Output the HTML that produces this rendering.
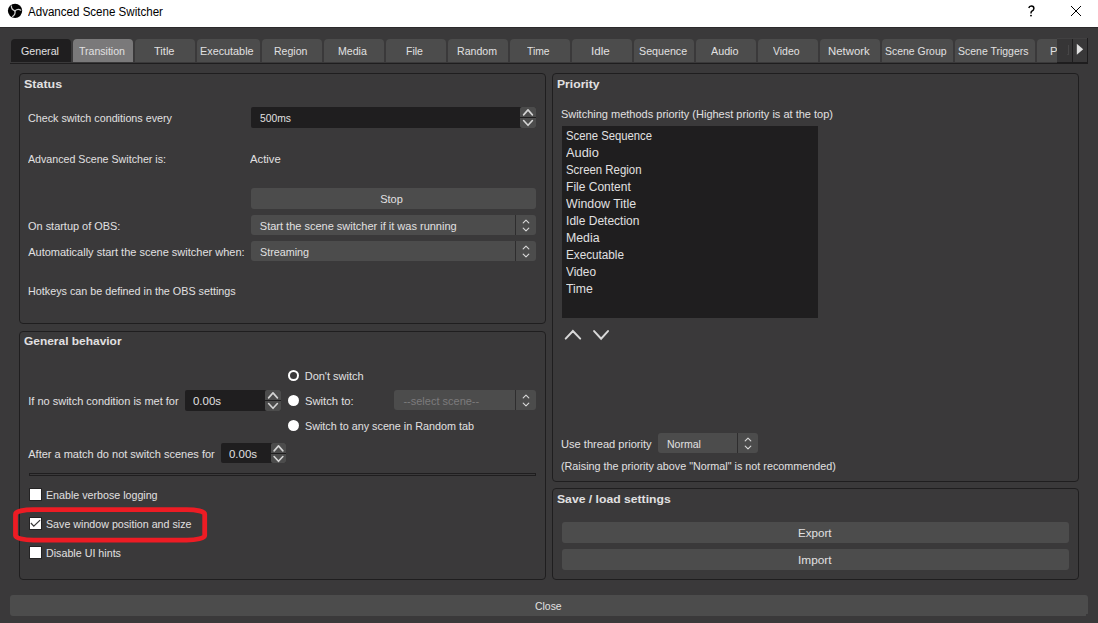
<!DOCTYPE html>
<html><head><meta charset="utf-8"><style>
html,body{margin:0;padding:0;width:1098px;height:623px;overflow:hidden;background:#3a393a;}
.r{position:absolute;}
.t{position:absolute;font-family:"Liberation Sans",sans-serif;white-space:pre;transform-origin:0 0;}
</style></head><body>
<div class="r" style="left:0px;top:0px;width:1098px;height:27px;background:#ffffff;"></div>
<div class="r" style="left:0px;top:27px;width:1098px;height:1px;background:#2b2a2b;"></div>
<svg class="r" style="left:7px;top:3px" width="16" height="16" viewBox="0 0 16 16">
<circle cx="8.05" cy="7.85" r="7.15" fill="#000"/>
<g fill="none" stroke="#cfcfcf" stroke-width="1.25" stroke-linecap="round">
<path d="M4.4 3.0 Q4.2 6.6 8.0 7.8"/>
<path d="M13.8 7.2 Q11.0 5.2 8.0 7.8"/>
<path d="M5.6 13.5 Q8.6 11.5 8.0 7.8"/>
</g>
</svg>
<svg class="r" style="left:1026px;top:4px" width="12" height="14" viewBox="0 0 12 14"><path d="M2.8 4.0 Q3.2 2.0 5.4 2.0 Q7.9 2.0 7.9 4.4 Q7.9 6.0 5.6 7.4 Q5.0 7.9 5.0 9.6" stroke="#000" stroke-width="1.45" fill="none"/><circle cx="5.0" cy="11.6" r="0.95" fill="#000"/></svg>
<svg class="r" style="left:1070px;top:5px" width="12" height="12" viewBox="0 0 12 12">
<path d="M1 1 L11 11 M11 1 L1 11" stroke="#000" stroke-width="1.0" fill="none"/></svg>
<div class="r" style="left:11px;top:39px;width:60px;height:23px;background:#1f1e1f;border-radius:4px 4px 0 0;"></div>
<div class="r" style="left:73px;top:39px;width:60px;height:23px;background:#7a797a;border-radius:4px 4px 0 0;"></div>
<div class="r" style="left:135px;top:39px;width:60px;height:23px;background:#4c4c4c;border-radius:4px 4px 0 0;"></div>
<div class="r" style="left:197px;top:39px;width:63px;height:23px;background:#4c4c4c;border-radius:4px 4px 0 0;"></div>
<div class="r" style="left:262px;top:39px;width:60px;height:23px;background:#4c4c4c;border-radius:4px 4px 0 0;"></div>
<div class="r" style="left:324px;top:39px;width:60px;height:23px;background:#4c4c4c;border-radius:4px 4px 0 0;"></div>
<div class="r" style="left:386px;top:39px;width:60px;height:23px;background:#4c4c4c;border-radius:4px 4px 0 0;"></div>
<div class="r" style="left:448px;top:39px;width:60px;height:23px;background:#4c4c4c;border-radius:4px 4px 0 0;"></div>
<div class="r" style="left:510px;top:39px;width:60px;height:23px;background:#4c4c4c;border-radius:4px 4px 0 0;"></div>
<div class="r" style="left:572px;top:39px;width:60px;height:23px;background:#4c4c4c;border-radius:4px 4px 0 0;"></div>
<div class="r" style="left:634px;top:39px;width:60px;height:23px;background:#4c4c4c;border-radius:4px 4px 0 0;"></div>
<div class="r" style="left:696px;top:39px;width:60px;height:23px;background:#4c4c4c;border-radius:4px 4px 0 0;"></div>
<div class="r" style="left:758px;top:39px;width:60px;height:23px;background:#4c4c4c;border-radius:4px 4px 0 0;"></div>
<div class="r" style="left:820px;top:39px;width:60px;height:23px;background:#4c4c4c;border-radius:4px 4px 0 0;"></div>
<div class="r" style="left:882px;top:39px;width:71px;height:23px;background:#4c4c4c;border-radius:4px 4px 0 0;"></div>
<div class="r" style="left:955px;top:39px;width:80px;height:23px;background:#4c4c4c;border-radius:4px 4px 0 0;"></div>
<div class="r" style="left:1037px;top:39px;width:20px;height:23px;background:#4c4c4c;border-radius:4px 0 0 0;"></div>
<div class="r" style="left:10px;top:63px;width:1047px;height:1px;background:#1f1e1f;"></div>
<div class="r" style="left:19px;top:73px;width:527px;height:251px;border:1px solid #1f1e1f;box-sizing:border-box;border-radius:4px;"></div>
<div class="r" style="left:19px;top:331px;width:527px;height:249px;border:1px solid #1f1e1f;box-sizing:border-box;border-radius:4px;"></div>
<div class="r" style="left:552px;top:73px;width:527px;height:409px;border:1px solid #1f1e1f;box-sizing:border-box;border-radius:4px;"></div>
<div class="r" style="left:552px;top:488px;width:527px;height:92px;border:1px solid #1f1e1f;box-sizing:border-box;border-radius:4px;"></div>
<div class="r" style="left:251px;top:107px;width:285px;height:21px;background:#1f1e1f;border-radius:2px;"></div>
<div class="r" style="left:520px;top:107px;width:16px;height:10px;background:#4c4c4c;border-radius:2px 2px 0 0;"></div>
<div class="r" style="left:520px;top:118px;width:16px;height:10px;background:#4c4c4c;border-radius:0 0 2px 2px;"></div>
<svg class="r" style="left:520px;top:107px" width="16" height="21" viewBox="0 0 16 21">
<path d="M3.5999999999999996 7.9 L8.0 2.9 L12.4 7.9 M3.5999999999999996 13.5 L8.0 18.3 L12.4 13.5" stroke="#d4d4d4" stroke-width="1.6" fill="none" stroke-linecap="round" stroke-linejoin="round"/></svg>
<div class="r" style="left:251px;top:188px;width:285px;height:21px;background:#4c4c4c;border-radius:3px;"></div>
<div class="r" style="left:251px;top:215px;width:285px;height:20px;background:#4c4c4c;border-radius:3px;"></div>
<div class="r" style="left:515px;top:215px;width:1px;height:20px;background:#2e2d2e;"></div>
<svg class="r" style="left:516px;top:215px" width="20" height="20" viewBox="0 0 20 20">
<path d="M7.2 7.9 L10.0 5.2 L12.8 7.9 M7.2 13.2 L10.0 15.9 L12.8 13.2" stroke="#d8d8d8" stroke-width="1.15" fill="none" stroke-linecap="round" stroke-linejoin="round"/></svg>
<div class="r" style="left:251px;top:241px;width:285px;height:20px;background:#4c4c4c;border-radius:3px;"></div>
<div class="r" style="left:515px;top:241px;width:1px;height:20px;background:#2e2d2e;"></div>
<svg class="r" style="left:516px;top:241px" width="20" height="20" viewBox="0 0 20 20">
<path d="M7.2 7.9 L10.0 5.2 L12.8 7.9 M7.2 13.2 L10.0 15.9 L12.8 13.2" stroke="#d8d8d8" stroke-width="1.15" fill="none" stroke-linecap="round" stroke-linejoin="round"/></svg>
<div class="r" style="left:288.0px;top:370.0px;width:11px;height:11px;border-radius:50%;background:#fff;"></div>
<div class="r" style="left:289.8px;top:371.8px;width:7.4px;height:7.4px;border-radius:50%;background:#3a393a;"></div>
<div class="r" style="left:185px;top:390px;width:96px;height:21px;background:#1f1e1f;border-radius:2px;"></div>
<div class="r" style="left:265px;top:390px;width:16px;height:10px;background:#4c4c4c;border-radius:2px 2px 0 0;"></div>
<div class="r" style="left:265px;top:401px;width:16px;height:10px;background:#4c4c4c;border-radius:0 0 2px 2px;"></div>
<svg class="r" style="left:265px;top:390px" width="16" height="21" viewBox="0 0 16 21">
<path d="M3.5999999999999996 7.9 L8.0 2.9 L12.4 7.9 M3.5999999999999996 13.5 L8.0 18.3 L12.4 13.5" stroke="#d4d4d4" stroke-width="1.6" fill="none" stroke-linecap="round" stroke-linejoin="round"/></svg>
<div class="r" style="left:288.0px;top:395.0px;width:11px;height:11px;border-radius:50%;background:#fff;"></div>
<div class="r" style="left:394px;top:390px;width:142px;height:20px;background:#4c4c4c;border-radius:3px;"></div>
<div class="r" style="left:515px;top:390px;width:1px;height:20px;background:#2e2d2e;"></div>
<svg class="r" style="left:516px;top:390px" width="20" height="20" viewBox="0 0 20 20">
<path d="M7.2 7.9 L10.0 5.2 L12.8 7.9 M7.2 13.2 L10.0 15.9 L12.8 13.2" stroke="#d8d8d8" stroke-width="1.15" fill="none" stroke-linecap="round" stroke-linejoin="round"/></svg>
<div class="r" style="left:288.0px;top:420.0px;width:11px;height:11px;border-radius:50%;background:#fff;"></div>
<div class="r" style="left:221px;top:443px;width:65px;height:20px;background:#1f1e1f;border-radius:2px;"></div>
<div class="r" style="left:271px;top:443px;width:15px;height:10px;background:#4c4c4c;border-radius:2px 2px 0 0;"></div>
<div class="r" style="left:271px;top:454px;width:15px;height:9px;background:#4c4c4c;border-radius:0 0 2px 2px;"></div>
<svg class="r" style="left:271px;top:443px" width="15" height="20" viewBox="0 0 15 20">
<path d="M3.0999999999999996 7.9 L7.5 2.9 L11.9 7.9 M3.0999999999999996 13.5 L7.5 18.3 L11.9 13.5" stroke="#d4d4d4" stroke-width="1.6" fill="none" stroke-linecap="round" stroke-linejoin="round"/></svg>
<div class="r" style="left:29px;top:473px;width:507px;height:3px;border:1px solid #1f1e1f;box-sizing:border-box;"></div>
<div class="r" style="left:29px;top:488px;width:13px;height:13px;background:#ffffff;border:1px solid #242324;box-sizing:border-box;"></div>
<div class="r" style="left:29px;top:517px;width:13px;height:13px;background:#ffffff;border:1px solid #242324;box-sizing:border-box;"></div>
<svg class="r" style="left:30px;top:518px" width="11" height="11" viewBox="0 0 11 11"><path d="M0.9 5.0 L3.8 8.2 L10.1 2.1" stroke="#3a393a" stroke-width="1.25" fill="none"/></svg>
<div class="r" style="left:29px;top:546px;width:13px;height:13px;background:#ffffff;border:1px solid #242324;box-sizing:border-box;"></div>
<div class="r" style="left:562px;top:126px;width:256px;height:192px;background:#1f1e1f;"></div>
<svg class="r" style="left:560px;top:326px" width="54" height="18" viewBox="0 0 54 18">
<path d="M5.7 12.6 L12.9 5 L20.2 12.6 M34.1 5.1 L41.1 12.7 L48 5.1" stroke="#d8d8d8" stroke-width="2" fill="none" stroke-linecap="round" stroke-linejoin="miter"/></svg>
<div class="r" style="left:658px;top:433px;width:100px;height:20px;background:#4c4c4c;border-radius:3px;"></div>
<div class="r" style="left:737px;top:433px;width:1px;height:20px;background:#2e2d2e;"></div>
<svg class="r" style="left:738px;top:433px" width="20" height="20" viewBox="0 0 20 20">
<path d="M7.2 7.9 L10.0 5.2 L12.8 7.9 M7.2 13.2 L10.0 15.9 L12.8 13.2" stroke="#d8d8d8" stroke-width="1.15" fill="none" stroke-linecap="round" stroke-linejoin="round"/></svg>
<div class="r" style="left:562px;top:522px;width:507px;height:21px;background:#4c4c4c;border-radius:3px;"></div>
<div class="r" style="left:562px;top:549px;width:507px;height:21px;background:#4c4c4c;border-radius:3px;"></div>
<div class="r" style="left:10px;top:595px;width:1078px;height:21px;background:#4c4c4c;border-radius:3px;"></div>
<svg class="r" style="left:0;top:0" width="230" height="560" viewBox="0 0 230 560">
<rect x="15.5" y="509.6" width="189.2" height="30.5" rx="18" ry="4.6" stroke="#ed1c24" stroke-width="4.8" fill="none"/></svg>
<div class="t" style="left:28.30px;top:6.00px;font-size:12px;line-height:12px;color:#000000;transform:scaleX(0.9634);">Advanced Scene Switcher</div>
<div class="t" style="left:20.70px;top:46.00px;font-size:11px;line-height:11px;color:#e1e0e1;transform:scaleX(0.9701);">General</div>
<div class="t" style="left:78.70px;top:46.00px;font-size:11px;line-height:11px;color:#e1e0e1;transform:scaleX(0.9597);">Transition</div>
<div class="t" style="left:154.25px;top:46.00px;font-size:11px;line-height:11px;color:#e1e0e1;transform:scaleX(1.0065);">Title</div>
<div class="t" style="left:200.40px;top:46.00px;font-size:11px;line-height:11px;color:#e1e0e1;transform:scaleX(0.9843);">Executable</div>
<div class="t" style="left:274.00px;top:46.00px;font-size:11px;line-height:11px;color:#e1e0e1;transform:scaleX(0.9569);">Region</div>
<div class="t" style="left:338.25px;top:46.00px;font-size:11px;line-height:11px;color:#e1e0e1;transform:scaleX(0.9631);">Media</div>
<div class="t" style="left:406.20px;top:46.00px;font-size:11px;line-height:11px;color:#e1e0e1;transform:scaleX(0.9561);">File</div>
<div class="t" style="left:456.70px;top:46.00px;font-size:11px;line-height:11px;color:#e1e0e1;transform:scaleX(0.9611);">Random</div>
<div class="t" style="left:527.40px;top:46.00px;font-size:11px;line-height:11px;color:#e1e0e1;transform:scaleX(0.9372);">Time</div>
<div class="t" style="left:591.35px;top:46.00px;font-size:11px;line-height:11px;color:#e1e0e1;transform:scaleX(1.0567);">Idle</div>
<div class="t" style="left:638.60px;top:46.00px;font-size:11px;line-height:11px;color:#e1e0e1;transform:scaleX(0.9723);">Sequence</div>
<div class="t" style="left:710.95px;top:46.00px;font-size:11px;line-height:11px;color:#e1e0e1;transform:scaleX(0.9764);">Audio</div>
<div class="t" style="left:773.40px;top:46.00px;font-size:11px;line-height:11px;color:#e1e0e1;transform:scaleX(0.9503);">Video</div>
<div class="t" style="left:827.85px;top:46.00px;font-size:11px;line-height:11px;color:#e1e0e1;transform:scaleX(1.0345);">Network</div>
<div class="t" style="left:885.40px;top:46.00px;font-size:11px;line-height:11px;color:#e1e0e1;transform:scaleX(0.9494);">Scene Group</div>
<div class="t" style="left:958.45px;top:46.00px;font-size:11px;line-height:11px;color:#e1e0e1;transform:scaleX(0.9523);">Scene Triggers</div>
<div class="t" style="left:1049.70px;top:46.00px;font-size:11px;line-height:11px;color:#e1e0e1;transform:scaleX(1.0264);">Pause</div>
<div class="t" style="left:23.80px;top:79.00px;font-size:11.5px;line-height:11.5px;color:#e1e0e1;font-weight:700;transform:scaleX(1.0833);">Status</div>
<div class="t" style="left:24.05px;top:336.00px;font-size:11.5px;line-height:11.5px;color:#e1e0e1;font-weight:700;transform:scaleX(1.0380);">General behavior</div>
<div class="t" style="left:557.10px;top:79.00px;font-size:11.5px;line-height:11.5px;color:#e1e0e1;font-weight:700;transform:scaleX(1.0569);">Priority</div>
<div class="t" style="left:557.10px;top:493.50px;font-size:11.5px;line-height:11.5px;color:#e1e0e1;font-weight:700;transform:scaleX(1.0585);">Save / load settings</div>
<div class="t" style="left:28.20px;top:113.00px;font-size:11px;line-height:11px;color:#e1e0e1;transform:scaleX(0.9772);">Check switch conditions every</div>
<div class="t" style="left:259.80px;top:113.00px;font-size:11px;line-height:11px;color:#e1e0e1;transform:scaleX(0.9366);">500ms</div>
<div class="t" style="left:28.20px;top:154.00px;font-size:11px;line-height:11px;color:#e1e0e1;transform:scaleX(0.9684);">Advanced Scene Switcher is:</div>
<div class="t" style="left:250.20px;top:154.00px;font-size:11px;line-height:11px;color:#e1e0e1;transform:scaleX(1.0252);">Active</div>
<div class="t" style="left:380.18px;top:194.00px;font-size:11px;line-height:11px;color:#e1e0e1;">Stop</div>
<div class="t" style="left:28.20px;top:221.00px;font-size:11px;line-height:11px;color:#e1e0e1;transform:scaleX(0.9942);">On startup of OBS:</div>
<div class="t" style="left:259.80px;top:221.30px;font-size:11px;line-height:11px;color:#e1e0e1;">Start the scene switcher if it was running</div>
<div class="t" style="left:28.20px;top:247.00px;font-size:11px;line-height:11px;color:#e1e0e1;">Automatically start the scene switcher when:</div>
<div class="t" style="left:259.80px;top:247.00px;font-size:11px;line-height:11px;color:#e1e0e1;transform:scaleX(0.9768);">Streaming</div>
<div class="t" style="left:28.20px;top:285.60px;font-size:11px;line-height:11px;color:#e1e0e1;transform:scaleX(0.9788);">Hotkeys can be defined in the OBS settings</div>
<div class="t" style="left:304.70px;top:371.00px;font-size:11px;line-height:11px;color:#e1e0e1;">Don't switch</div>
<div class="t" style="left:28.25px;top:396.00px;font-size:11px;line-height:11px;color:#e1e0e1;">If no switch condition is met for</div>
<div class="t" style="left:192.50px;top:396.00px;font-size:11px;line-height:11px;color:#e1e0e1;transform:scaleX(1.0416);">0.00s</div>
<div class="t" style="left:304.70px;top:396.00px;font-size:11px;line-height:11px;color:#e1e0e1;transform:scaleX(1.0217);">Switch to:</div>
<div class="t" style="left:403.40px;top:396.00px;font-size:11px;line-height:11px;color:#7c7b7c;">--select scene--</div>
<div class="t" style="left:304.70px;top:421.00px;font-size:11px;line-height:11px;color:#e1e0e1;transform:scaleX(0.9799);">Switch to any scene in Random tab</div>
<div class="t" style="left:28.25px;top:449.00px;font-size:11px;line-height:11px;color:#e1e0e1;">After a match do not switch scenes for</div>
<div class="t" style="left:228.75px;top:449.00px;font-size:11px;line-height:11px;color:#e1e0e1;transform:scaleX(1.0416);">0.00s</div>
<div class="t" style="left:46.00px;top:490.00px;font-size:11px;line-height:11px;color:#e1e0e1;transform:scaleX(0.9703);">Enable verbose logging</div>
<div class="t" style="left:46.00px;top:519.00px;font-size:11px;line-height:11px;color:#e1e0e1;transform:scaleX(0.9710);">Save window position and size</div>
<div class="t" style="left:46.00px;top:548.00px;font-size:11px;line-height:11px;color:#e1e0e1;transform:scaleX(0.9731);">Disable UI hints</div>
<div class="t" style="left:560.90px;top:109.00px;font-size:11px;line-height:11px;color:#e1e0e1;">Switching methods priority (Highest priority is at the top)</div>
<div class="t" style="left:566.10px;top:130.00px;font-size:12px;line-height:12px;color:#e1e0e1;transform:scaleX(0.9402);">Scene Sequence</div>
<div class="t" style="left:566.10px;top:147.00px;font-size:12px;line-height:12px;color:#e1e0e1;transform:scaleX(1.0672);">Audio</div>
<div class="t" style="left:566.10px;top:164.00px;font-size:12px;line-height:12px;color:#e1e0e1;transform:scaleX(0.9516);">Screen Region</div>
<div class="t" style="left:566.10px;top:181.00px;font-size:12px;line-height:12px;color:#e1e0e1;">File Content</div>
<div class="t" style="left:566.10px;top:198.00px;font-size:12px;line-height:12px;color:#e1e0e1;transform:scaleX(1.0294);">Window Title</div>
<div class="t" style="left:566.10px;top:215.00px;font-size:12px;line-height:12px;color:#e1e0e1;">Idle Detection</div>
<div class="t" style="left:566.10px;top:232.00px;font-size:12px;line-height:12px;color:#e1e0e1;transform:scaleX(1.0256);">Media</div>
<div class="t" style="left:566.10px;top:249.00px;font-size:12px;line-height:12px;color:#e1e0e1;transform:scaleX(0.9764);">Executable</div>
<div class="t" style="left:566.10px;top:266.00px;font-size:12px;line-height:12px;color:#e1e0e1;transform:scaleX(0.9836);">Video</div>
<div class="t" style="left:566.10px;top:283.00px;font-size:12px;line-height:12px;color:#e1e0e1;transform:scaleX(1.0185);">Time</div>
<div class="t" style="left:560.90px;top:439.00px;font-size:11px;line-height:11px;color:#e1e0e1;transform:scaleX(1.0082);">Use thread priority</div>
<div class="t" style="left:666.90px;top:439.00px;font-size:11px;line-height:11px;color:#e1e0e1;transform:scaleX(0.9578);">Normal</div>
<div class="t" style="left:561.20px;top:461.00px;font-size:11px;line-height:11px;color:#e1e0e1;transform:scaleX(0.9797);">(Raising the priority above "Normal" is not recommended)</div>
<div class="t" style="left:797.75px;top:528.00px;font-size:11px;line-height:11px;color:#e1e0e1;transform:scaleX(1.0553);">Export</div>
<div class="t" style="left:797.75px;top:555.00px;font-size:11px;line-height:11px;color:#e1e0e1;transform:scaleX(1.0766);">Import</div>
<div class="t" style="left:534.65px;top:601.00px;font-size:11px;line-height:11px;color:#e1e0e1;transform:scaleX(0.9475);">Close</div>
<div class="r" style="left:1057px;top:38px;width:31px;height:26px;background:#1e1d1e"></div>
<div class="r" style="left:1057px;top:38px;width:30px;height:1px;background:#414041"></div>
<div class="r" style="left:1057px;top:39px;width:15px;height:23px;background:#363536"></div>
<div class="r" style="left:1073px;top:39px;width:14px;height:23px;background:#393839"></div>
<div class="r" style="left:1068px;top:45px;width:1px;height:10px;background:#474647"></div>
<div class="r" style="left:1067px;top:54px;width:1px;height:1px;background:#434243"></div>
<svg class="r" style="left:1076px;top:43px" width="8" height="13" viewBox="0 0 8 13"><path d="M0.8 0.8 L7.2 6.3 L0.8 11.8 Z" fill="#e0e0e0"/></svg>
<div class="r" style="left:1086px;top:614px;width:2px;height:2px;background:#3a393a"></div>
</body></html>
